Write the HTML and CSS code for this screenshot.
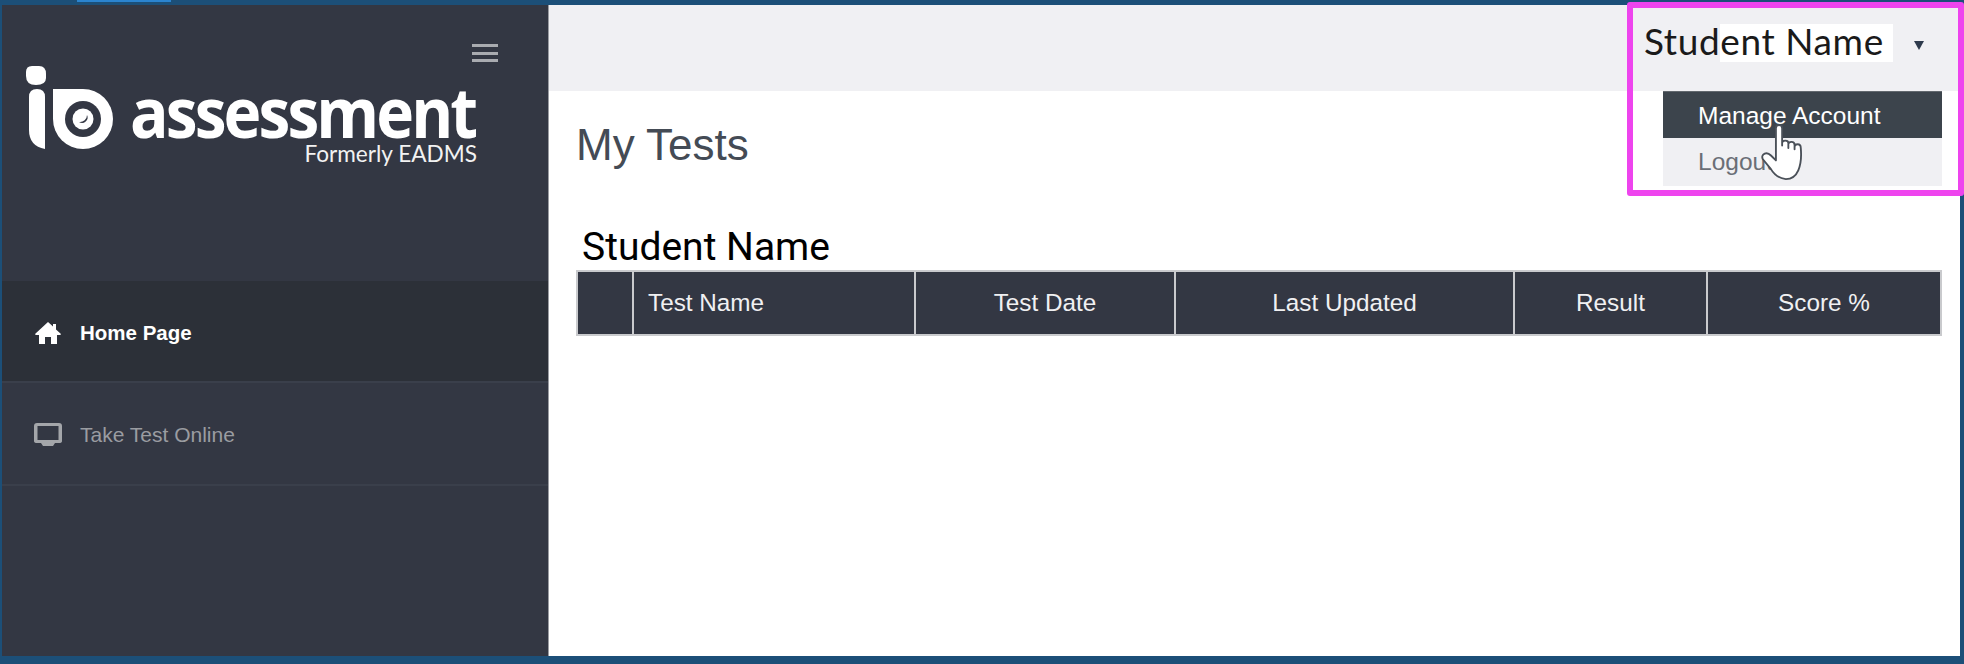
FILE: index.html
```html
<!DOCTYPE html>
<html lang="en">
<head>
<meta charset="utf-8">
<title>My Tests</title>
<link rel="stylesheet" href="styles.css">
</head>
<body>
<div class="tab-mark"></div>
<div class="frame">
  <aside class="sidebar">
    <div class="side-top">
      <div class="burger"><i></i><i></i><i></i></div>
      <div class="logo">
        <svg class="logo-mark" width="100" height="90" viewBox="0 0 100 90">
          <path d="M6 6 Q6 0 12 0 H19 Q26 0 26 8 V12 Q26 19 16 19 Q6 19 6 10 Z" fill="#fff"/>
          <path d="M9 31 Q9 23 17 23 Q25 23 25 31 V83 Q9 80 9 64 Z" fill="#fff"/>
          <path d="M33 23 H63 A30 30 0 0 1 63 83 A30 30 0 0 1 33 53 Z" fill="#fff"/>
          <circle cx="63" cy="53" r="18" fill="#333743"/>
          <circle cx="63" cy="53" r="10.500" fill="#fff"/>
          <path d="M59 56 A5.500 5.500 0 0 0 67 49 A7 7 0 0 1 59 56 Z" fill="#333743"/>
        </svg>
        <div class="logo-text">
          <div class="logo-name">assessment</div>
          <div class="logo-sub">Formerly EADMS</div>
        </div>
      </div>
    </div>
    <nav class="nav">
      <a class="nav-item active">
        <svg class="nav-icon" width="28" height="22" viewBox="0 0 28 22"><path d="M14 0 L19 4.500 V2 H22 V7.500 L27 12 Q27 13 25.500 13 H23 V22 H17 V15 H11 V22 H5 V13 H2.500 Q1 13 1 12 Z" fill="#fff"/></svg>
        <span>Home Page</span>
      </a>
      <a class="nav-item">
        <svg class="nav-icon" width="28" height="24" viewBox="0 0 28 24"><path d="M3 0 H25 Q28 0 28 3 V18 Q28 20 25 20 H21 L19 23 H9 L7 20 H3 Q0 20 0 18 V3 Q0 0 3 0 Z M3.500 3 V17 H24.500 V3 Z" fill="#a4a6aa" fill-rule="evenodd"/></svg>
        <span>Take Test Online</span>
      </a>
    </nav>
  </aside>
  <main class="main">
    <header class="topbar">
      <div class="user"><span>Stud</span><span class="patch">ent Name</span></div>
      <span class="caret"></span>
    </header>
    <div class="content">
      <h1 class="title">My Tests</h1>
      <div class="student">Student Name</div>
      <table class="tests">
        <thead>
          <tr>
            <th class="c0"></th>
            <th class="c1">Test Name</th>
            <th class="c2">Test Date</th>
            <th class="c3">Last Updated</th>
            <th class="c4">Result</th>
            <th class="c5">Score %</th>
          </tr>
        </thead>
      </table>
    </div>
  </main>
</div>
<div class="menu">
  <a class="menu-item hover">Manage Account</a>
  <a class="menu-item">Logout</a>
</div>
<svg class="cursor" width="46" height="58" viewBox="-1 0 37 46">
  <path d="M11 3 Q11 0.500 13.500 0.500 Q16 0.500 16 3 V17 V15 Q16 13 18.500 13 Q21 13 21 15 V19 V16 Q21 14 23.500 14 Q26 14 26 16.500 V20 V18 Q26 16 28.500 16 Q31 16 31 19 Q32 30 29 37 Q26 44 19 44 Q11 43 7 36 L0.500 28 Q-1 25 2 23.500 Q4.500 22.500 7 25 L11 29 Z" fill="#fff" stroke="#4a5058" stroke-width="1.500" stroke-linejoin="round"/>
</svg>
<div class="highlight"></div>
</body>
</html>
```
FILE: styles.css
```css
* { box-sizing: border-box; }
html, body { margin: 0; height: 100%; }
body {
  position: relative;
  width: 1964px;
  height: 664px;
  overflow: hidden;
  background: #1c4f78;
  font-family: "Liberation Sans", Arial, sans-serif;
}
.tab-mark {
  position: absolute;
  left: 77px;
  top: 0;
  width: 94px;
  height: 2px;
  background: #2b84cf;
}
.frame {
  display: flex;
  height: 664px;
  padding: 5px 4px 8px 2px;
}
.sidebar {
  width: 547px;
  flex: none;
  background: #333743;
  border-right: 1px solid #9a9ca2;
}
.side-top {
  height: 276px;
  padding: 39px 50px 0 0;
  display: flex;
  flex-direction: column;
  align-items: flex-end;
}
.burger {
  width: 26px;
  display: flex;
  flex-direction: column;
  gap: 4.500px;
}
.burger i {
  display: block;
  height: 3px;
  background: #a9abb0;
}
.logo {
  display: flex;
  align-self: flex-start;
  margin-top: 4px;
  margin-left: 18px;
}
.logo-mark { flex: none; }
.logo-text {
  margin-left: 10px;
  width: 347px;
  color: #fff;
  font-family: "Open Sans", sans-serif;
  text-align: right;
}
.logo-name {
  font-size: 64px;
  font-weight: 700;
  line-height: 56px;
  margin-top: 20px;
  letter-spacing: -2.900px;
  white-space: nowrap;
  text-align: left;
  transform: scaleY(1.1);
  transform-origin: 50% 90%;
}
.logo-sub {
  font-family: "Lato", sans-serif;
  font-size: 22.600px;
  line-height: 22px;
  margin-top: 1px;
  color: #f2f2f2;
  white-space: nowrap;
}
.nav-item {
  display: flex;
  align-items: center;
  height: 103px;
  padding: 2px 0 0 32px;
  gap: 18px;
  font-size: 21px;
  color: #9a9ca1;
  border-bottom: 2px solid #3a3f4b;
}
.nav-item.active {
  height: 102px;
  padding-top: 3px;
  background: #2c3038;
  color: #fff;
  font-weight: 700;
  font-size: 20.500px;
}
.main {
  flex: 1;
  background: #fff;
  display: flex;
  flex-direction: column;
}
.topbar {
  height: 86px;
  flex: none;
  background: #f0f0f3;
  display: flex;
  align-items: flex-start;
  padding: 19px 0 0 1095px;
}
.user {
  font-family: "Lato", sans-serif;
  font-size: 37px;
  line-height: 34px;
  color: #1a1a1a;
  letter-spacing: 0.600px;
  white-space: nowrap;
}
.patch {
  display: inline-block;
  background: #fff;
  padding: 0 9px 4px 0;
}
.caret {
  margin: 17px 0 0 21px;
  width: 0;
  height: 0;
  border-left: 5.500px solid transparent;
  border-right: 5.500px solid transparent;
  border-top: 9px solid #2e3a4c;
}
.content {
  padding: 29px 18px 0 27px;
}
.title {
  margin: 0;
  font-family: "Liberation Sans", sans-serif;
  font-weight: 400;
  font-size: 44px;
  line-height: 50px;
  color: #444b55;
}
.student {
  margin: 55px 0 0 6px;
  font-family: Roboto, sans-serif;
  font-size: 39px;
  line-height: 45px;
  color: #000;
}
.tests {
  width: 1366px;
  height: 66px;
  border-collapse: collapse;
  table-layout: fixed;
  background: #333743;
}
.tests th {
  padding: 0;
  border: 2px solid #c9cacd;
  color: #f0f0f2;
  font-weight: 400;
  font-size: 24.300px;
  text-align: center;
}
.tests .c0 { width: 56px; }
.tests .c1 { width: 282px; text-align: left; padding-left: 14px; }
.tests .c2 { width: 260px; }
.tests .c3 { width: 339px; }
.tests .c4 { width: 193px; }
.menu {
  position: absolute;
  left: 1663px;
  top: 91px;
  width: 279px;
  background: #fff;
  padding-bottom: 5px;
}
.menu-item {
  display: block;
  height: 48px;
  line-height: 47px;
  padding-left: 35px;
  font-size: 24.500px;
  color: #6a6e76;
  background: #f0f0f3;
}
.menu-item.hover {
  height: 47px;
  background: #3c444c;
  border-top: 1px solid #62686e;
  color: #fff;
}
.cursor {
  position: absolute;
  left: 1761px;
  top: 124px;
}
.highlight {
  position: absolute;
  left: 1627px;
  top: 2px;
  width: 337px;
  height: 194px;
  border: 6px solid #ee44ee;
  border-radius: 3px;
}
```
